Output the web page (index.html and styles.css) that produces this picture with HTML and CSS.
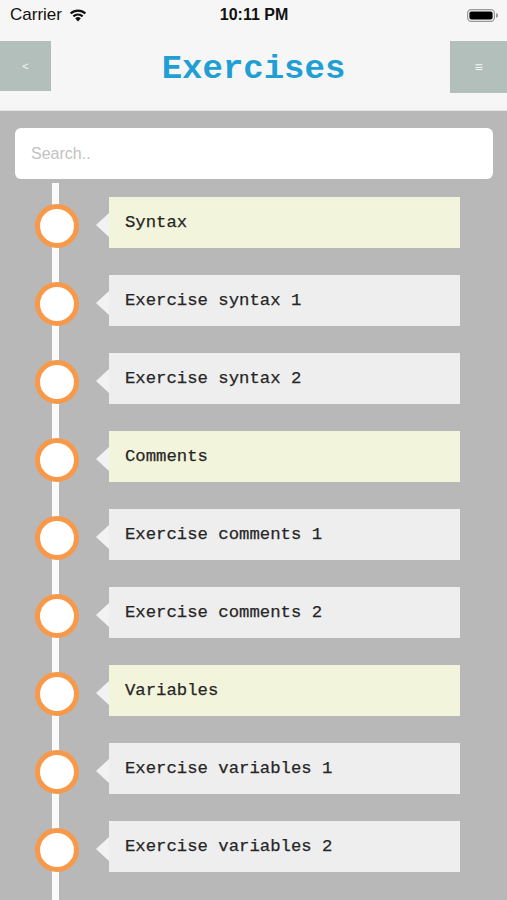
FILE: index.html
```html
<!DOCTYPE html>
<html>
<head>
<meta charset="utf-8">
<link rel="stylesheet" href="styles.css">
</head>
<body>
<div class="app">
  <div class="status">
    <div class="status-left">
      <span class="carrier">Carrier</span>
      <svg class="wifi" width="20" height="15" viewBox="0 0 20 15">
        <path d="M10 14.5 L7.2 11.4 A4 4 0 0 1 12.8 11.4 Z" fill="#111"/>
        <path d="M4.6 8.6 A7.8 7.8 0 0 1 15.4 8.6 L13.9 10.2 A5.6 5.6 0 0 0 6.1 10.2 Z" fill="#111"/>
        <path d="M1.9 5.7 A11.8 11.8 0 0 1 18.1 5.7 L16.6 7.3 A9.6 9.6 0 0 0 3.4 7.3 Z" fill="#111"/>
      </svg>
    </div>
    <div class="time">10:11 PM</div>
    <div class="status-right">
      <svg width="31" height="13" viewBox="0 0 31 13">
        <rect x="0.6" y="0.6" width="26.8" height="11.8" rx="3.6" fill="none" stroke="#999" stroke-width="1.2"/>
        <rect x="2.4" y="2.4" width="23.2" height="8.2" rx="2" fill="#000"/>
        <path d="M29 4.3 A2.2 2.2 0 0 1 29 8.7 Z" fill="#999"/>
      </svg>
    </div>
  </div>
  <div class="nav">
    <button class="nav-btn back">&lt;</button>
    <h1 class="title">Exercises</h1>
    <button class="nav-btn menu">&#8801;</button>
  </div>
  <div class="content">
    <div class="search">Search..</div>
    <div class="timeline">
      <div class="row"><span class="dot"></span><div class="card topic">Syntax</div></div>
      <div class="row"><span class="dot"></span><div class="card">Exercise syntax 1</div></div>
      <div class="row"><span class="dot"></span><div class="card">Exercise syntax 2</div></div>
      <div class="row"><span class="dot"></span><div class="card topic">Comments</div></div>
      <div class="row"><span class="dot"></span><div class="card">Exercise comments 1</div></div>
      <div class="row"><span class="dot"></span><div class="card">Exercise comments 2</div></div>
      <div class="row"><span class="dot"></span><div class="card topic">Variables</div></div>
      <div class="row"><span class="dot"></span><div class="card">Exercise variables 1</div></div>
      <div class="row"><span class="dot"></span><div class="card">Exercise variables 2</div></div>
    </div>
  </div>
</div>
</body>
</html>
```
FILE: styles.css
```css
* { box-sizing: border-box; }
html, body { margin: 0; padding: 0; }
body {
  width: 507px;
  height: 900px;
  overflow: hidden;
  font-family: "Liberation Sans", Arial, sans-serif;
  background: #b8b8b8;
}
.app { display: flex; flex-direction: column; height: 900px; overflow: hidden; }
.status {
  height: 40px;
  flex: none;
  background: #f6f6f6;
  display: grid;
  grid-template-columns: 1fr auto 1fr;
  align-items: center;
  padding: 0 9px 10px 10px;
}
.status-left { display: flex; align-items: center; gap: 6px; }
.carrier { font-size: 17px; color: #111; }
.wifi { margin-top: -2px; }
.time { font-size: 16px; font-weight: 700; color: #111; }
.status-right { display: flex; justify-content: flex-end; }
.nav {
  height: 71px;
  flex: none;
  background: #f6f6f6;
  display: grid;
  grid-template-columns: 1fr auto 1fr;
  align-items: start;
  padding-top: 1px;
  border-bottom: 1px solid #e4e4e4;
}
.nav-btn {
  border: none;
  margin: 0;
  padding: 0;
  background: #b3bfbb;
  color: #f4f6f5;
  font-family: "Liberation Sans", Arial, sans-serif;
}
.back { justify-self: start; width: 51px; height: 50px; font-size: 11px; }
.menu { justify-self: end; width: 57px; height: 52px; font-size: 14px; }
.title {
  margin: 0;
  padding-top: 8px;
  font-family: "Liberation Mono", "Courier New", monospace;
  font-weight: 700;
  font-size: 34px;
  line-height: 40px;
  color: #1f9fd3;
}
.content { flex: 1; min-height: 0; overflow: hidden; padding: 17px 14px 0 15px; }
.search {
  height: 51px;
  background: #fff;
  border-radius: 6px;
  padding-left: 16px;
  display: flex;
  align-items: center;
  font-size: 16px;
  color: #c2c2c2;
}
.timeline {
  position: relative;
  padding-top: 18px;
  display: flex;
  flex-direction: column;
  gap: 27px;
}
.timeline::before {
  content: "";
  position: absolute;
  left: 37px;
  top: 4px;
  bottom: -40px;
  width: 7px;
  background: #fafafa;
}
.row { display: flex; align-items: center; position: relative; padding-left: 20px; }
.dot {
  width: 44px;
  height: 44px;
  border-radius: 50%;
  border: 5px solid #f8994a;
  background: #fff;
  margin-top: 6px;
  flex: none;
  position: relative;
}
.card {
  position: relative;
  margin-left: 30px;
  width: 351px;
  height: 51px;
  background: #eeeeee;
  display: flex;
  align-items: center;
  padding-left: 16px;
  font-family: "Liberation Mono", "Courier New", monospace;
  font-size: 17.3px;
  color: #262626;
  -webkit-text-stroke: 0.25px #262626;
}
.card.topic { background: #f3f4dc; }
.card::before {
  content: "";
  position: absolute;
  left: -13px;
  top: 16px;
  border-top: 12px solid transparent;
  border-bottom: 12px solid transparent;
  border-right: 13px solid #f2f2f2;
}
```
